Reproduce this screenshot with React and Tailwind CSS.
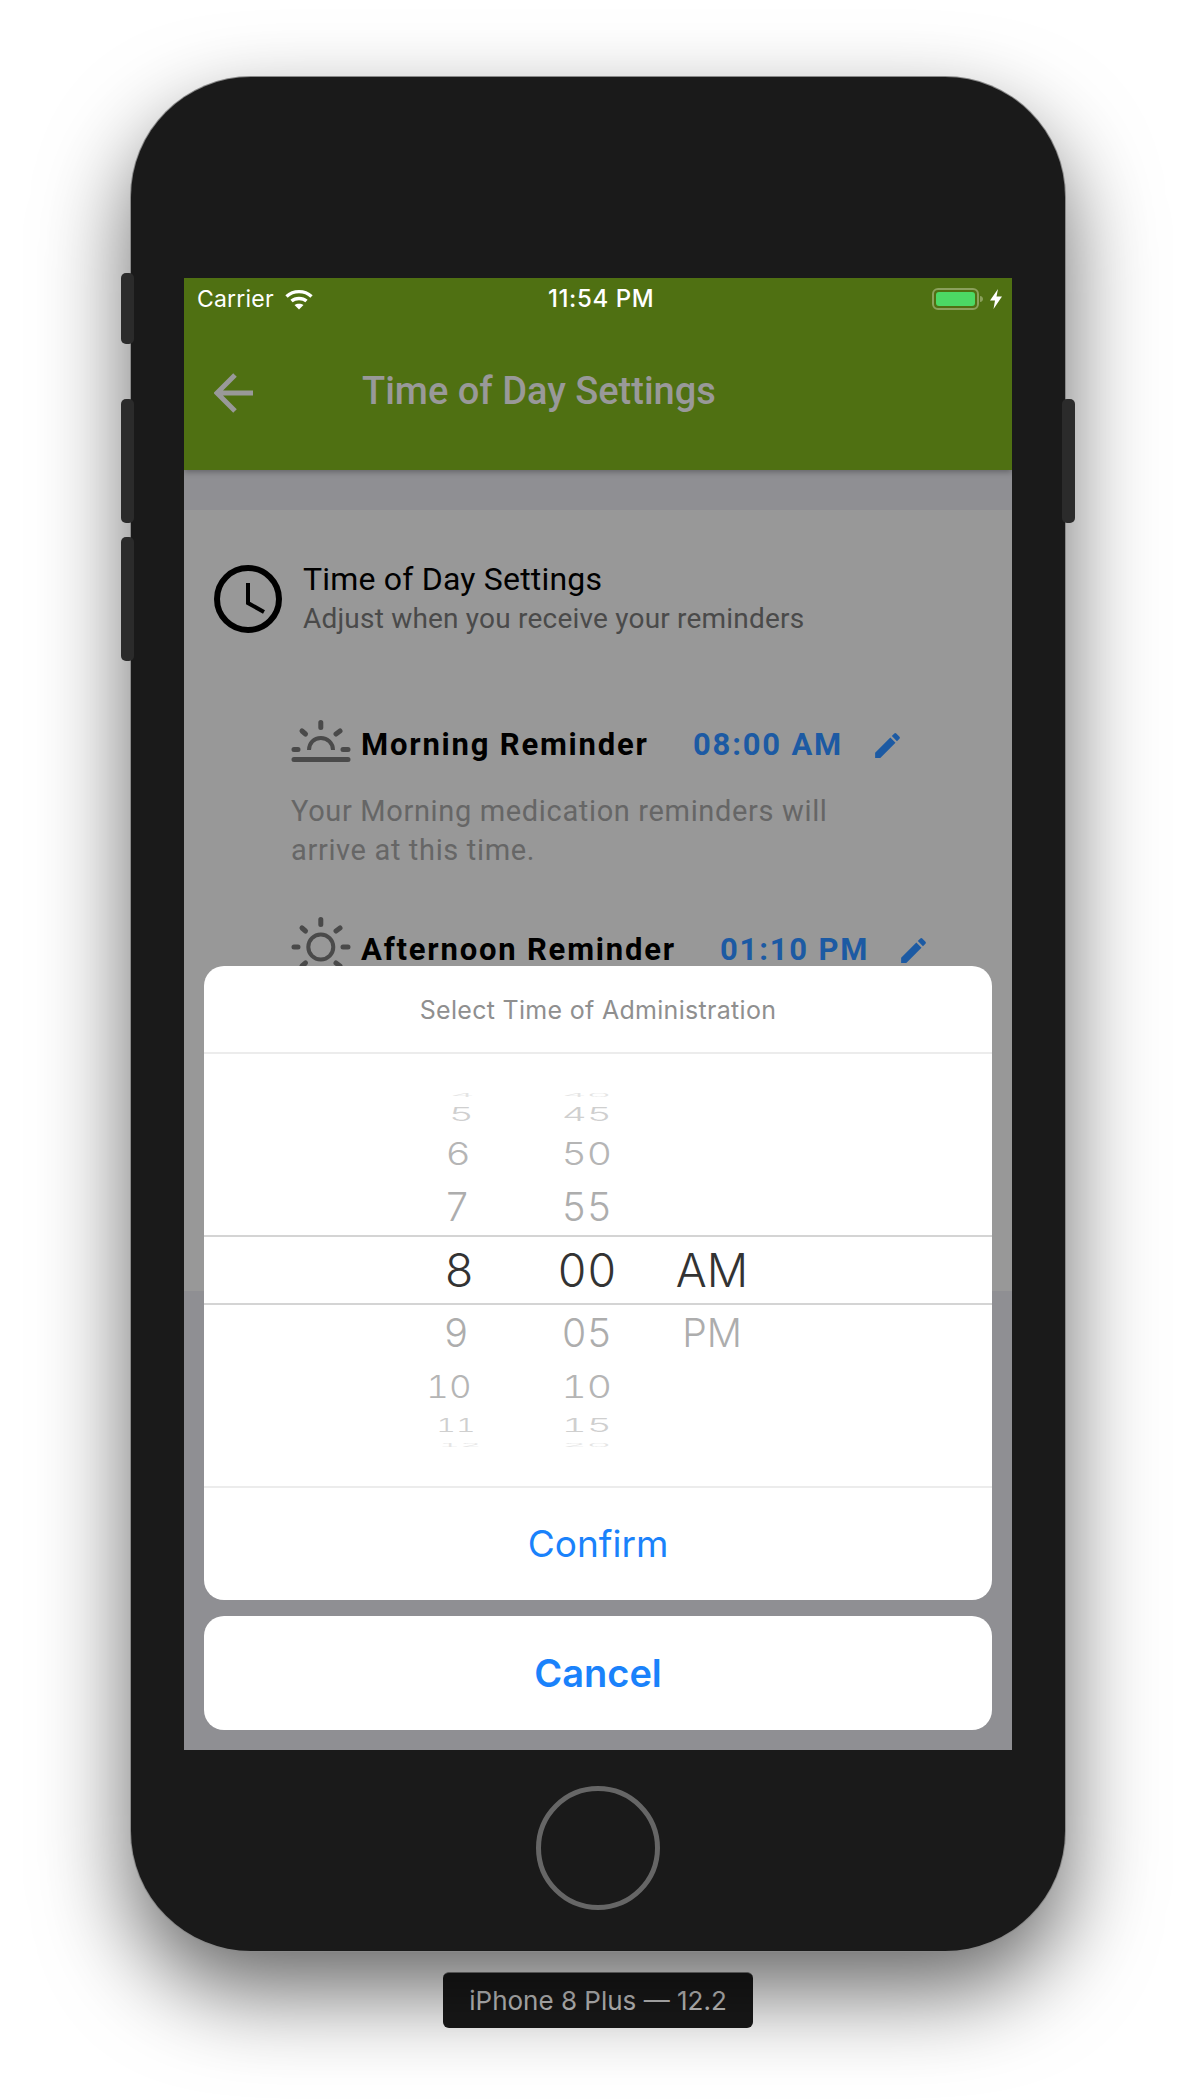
import React from 'react';
import { MdEdit } from 'react-icons/md';

const hourRows = [
  { h: 'h-[10px]', hour: '4', min: '40', hourX: 'scale-x-[0.82]', pad: 'pr-[27px]', sx: 'scale-x-[0.82]', sy: 'scale-y-[0.1]', color: 'text-[#e4e4e4]' },
  { h: 'h-[28px]', hour: '5', min: '45', hourX: 'scale-x-[0.84]', pad: 'pr-[28px]', sx: 'scale-x-[0.84]', sy: 'scale-y-[0.41]', color: 'text-[#cfcfcf]' },
  { h: 'h-[50px]', hour: '6', min: '50', hourX: 'scale-x-[0.85]', pad: 'pr-[31px]', sx: 'scale-x-[0.85]', sy: 'scale-y-[0.68]', color: 'text-[#b5b5b5]' },
  { h: 'h-[57px]', hour: '7', min: '55', hourX: 'scale-x-[0.85]', pad: 'pr-[32px]', sx: 'scale-x-[0.85]', sy: 'scale-y-[0.85]', color: 'text-[#adadad]' },
  { h: 'h-[70px]', hour: '8', min: '00', ampm: 'AM', hourX: '', pad: 'pr-[28px]', sx: '', sy: '', color: 'text-[#333333]', selected: true },
  { h: 'h-[55px]', hour: '9', min: '05', ampm: 'PM', hourX: 'scale-x-[0.85]', pad: 'pr-[33px]', sx: 'scale-x-[0.85]', sy: 'scale-y-[0.85]', color: 'text-[#adadad]' },
  { h: 'h-[52px]', hour: '10', min: '10', hourX: 'scale-x-[0.76]', pad: 'pr-[30px]', sx: 'scale-x-[0.85]', sy: 'scale-y-[0.68]', color: 'text-[#b5b5b5]' },
  { h: 'h-[25px]', hour: '11', min: '15', hourX: 'scale-x-[0.66]', pad: 'pr-[26px]', sx: 'scale-x-[0.84]', sy: 'scale-y-[0.41]', color: 'text-[#cfcfcf]' },
  { h: 'h-[15px]', hour: '12', min: '20', hourX: 'scale-x-[0.72]', pad: 'pr-[20px]', sx: 'scale-x-[0.82]', sy: 'scale-y-[0.1]', color: 'text-[#e4e4e4]' },
];

const WheelRow = ({ row }) => {
  const right = `block leading-none origin-right ${row.hourX} ${row.sy}`;
  const center = `block leading-none ${row.sx} ${row.sy}`;
  return (
    <div
      className={`grid grid-cols-[298px_170px_80px] grid-rows-[minmax(0,1fr)] font-['Inter',sans-serif] font-light tabular-nums text-[46px] ${row.h} ${row.color} ${
        row.selected ? 'border-y-2 border-[#d4d4d4]' : ''
      }`}
    >
      <div className={`min-h-0 flex items-center justify-end ${row.pad}`}>
        <span className={right}>{row.hour}</span>
      </div>
      <div className="min-h-0 flex items-center justify-center">
        <span className={center}>{row.min}</span>
      </div>
      <div className="min-h-0 flex items-center justify-center whitespace-nowrap">
        {row.ampm && <span className={center}>{row.ampm}</span>}
      </div>
    </div>
  );
};

const ClockIcon = () => (
  <svg width="68" height="68" viewBox="0 0 68 68" fill="none" stroke="#000" className="shrink-0">
    <circle cx="34" cy="34" r="31" strokeWidth="6" />
    <path d="M34 18V38L50 47" strokeWidth="4" />
  </svg>
);

const SunriseIcon = () => (
  <svg width="60" height="42" viewBox="0 0 60 42" fill="none" stroke="#4a4a4a" strokeWidth="5" strokeLinecap="round" className="shrink-0">
    <path d="M29.8 2.5V7.5M11 11L14.5 14M49 11L45 14M3 29.5H7M52 29.5H57M3 39.5H57" />
    <path d="M18 30C18 23 23 18 29.8 18C36.5 18 42 23 42 30" strokeWidth="4" strokeLinecap="butt" />
  </svg>
);

const SunIcon = () => (
  <svg width="60" height="60" viewBox="0 0 60 60" fill="none" stroke="#4a4a4a" strokeWidth="5" strokeLinecap="round" className="shrink-0">
    <circle cx="29.8" cy="30" r="12.5" strokeWidth="4" />
    <path d="M29.8 2.5V7.5M11 11L14.5 14M49 11L45 14M3 30H7M52 30H57M11 49L14.5 46M49 49L45 46" />
  </svg>
);

const ReminderRow = ({ icon, title, time, titleWidth, offset }) => (
  <div className="flex items-start">
    {icon}
    <div className={`flex items-center h-[34px] ml-[10px] font-['Roboto',sans-serif] font-bold text-[31px] leading-[34px] tracking-[1.8px] whitespace-nowrap ${offset}`}>
      <span className={`text-black ${titleWidth}`}>{title}</span>
      <span className="text-[#1c5aa3]">{time}</span>
      <MdEdit className="ml-[28px] text-[#1c5aa3]" size={33} />
    </div>
  </div>
);

export default function App() {
  return (
    <div className="relative w-[1196px] h-[2100px] bg-white overflow-hidden pt-[77px]">
      {/* hardware buttons */}
      <div className="absolute z-10 left-[121px] top-[273px] w-[13px] h-[71px] rounded-[5px] bg-[#2b2b2b]" />
      <div className="absolute z-10 left-[121px] top-[399px] w-[13px] h-[124px] rounded-[5px] bg-[#2b2b2b]" />
      <div className="absolute z-10 left-[121px] top-[537px] w-[13px] h-[124px] rounded-[5px] bg-[#2b2b2b]" />
      <div className="absolute z-10 left-[1062px] top-[399px] w-[13px] h-[124px] rounded-[5px] bg-[#2b2b2b]" />

      <div className="relative mx-auto w-[934px] h-[1874px] rounded-[120px] bg-[#1a1a1a] pt-[201px] flex flex-col items-center shadow-[0_0_0_1px_#8a8a8a,0_40px_90px_rgba(0,0,0,0.6)]">
        <div className="relative w-[828px] h-[1472px] bg-[#8f8f93] overflow-hidden shrink-0">
          <header className="h-[192px] bg-[#4f7012] shadow-[0_2px_6px_rgba(0,0,0,0.3)]">
            <div className="relative flex items-center justify-between h-[42px] pl-[13px] pr-[10px] text-white font-['Inter',sans-serif]">
              <div className="flex items-center">
                <span className="text-[23px] leading-none tracking-[0.2px]">Carrier</span>
                <svg width="28" height="21" viewBox="0 0 28 21" className="ml-[11px]" fill="none" stroke="#fff" strokeWidth="3.4">
                  <path d="M1.5 7.5C8.5 1 19.5 1 26.5 7.5" />
                  <path d="M6.5 12C10.5 8.6 17.5 8.6 21.5 12" />
                  <path d="M14 20.5L9.5 16C12 14.3 16 14.3 18.5 16Z" fill="#fff" stroke="none" />
                </svg>
              </div>
              <span className="absolute left-[364px] text-[24px] tracking-[0.6px] leading-none font-medium whitespace-nowrap">11:54 PM</span>
              <div className="flex items-center">
                <svg width="52" height="22" viewBox="0 0 52 22">
                  <rect x="1" y="1" width="45" height="20" rx="5" fill="none" stroke="#8ba05c" strokeWidth="2" />
                  <rect x="4" y="4" width="39" height="14" rx="3" fill="#4cd964" />
                  <path d="M48 8C50 8 51 9.5 51 11C51 12.5 50 14 48 14Z" fill="#8ba05c" />
                </svg>
                <svg width="12" height="20" viewBox="0 0 12 20" className="ml-[6px]">
                  <path d="M8 0L0 11.5H5L3.5 20L12 7.5H6.5Z" fill="#fff" />
                </svg>
              </div>
            </div>
            <div className="flex items-center h-[146px] pl-[30px]">
              <svg width="40" height="40" viewBox="0 0 40 40" fill="none" stroke="#999999" strokeWidth="5">
                <path d="M21 2L3 20L21 38M3 20H39" />
              </svg>
              <h1 className="ml-[108px] -mt-[5px] font-['Roboto',sans-serif] font-medium text-[38px] leading-none text-[#999999] whitespace-nowrap">
                Time of Day Settings
              </h1>
            </div>
          </header>

          <section className="mt-[40px] h-[781px] bg-[#989898] pt-[49px]">
            <div className="flex items-center pl-[30px]">
              <ClockIcon />
              <div className="ml-[21px] font-['Roboto',sans-serif]">
                <h2 className="text-[32px] leading-[40px] tracking-[0.2px] text-black whitespace-nowrap">Time of Day Settings</h2>
                <p className="text-[28px] leading-[40px] tracking-[0.2px] text-[#4a4a4a] whitespace-nowrap">Adjust when you receive your reminders</p>
              </div>
            </div>
            <div className="pl-[107px] mt-[81px]">
              <ReminderRow icon={<SunriseIcon />} title="Morning Reminder" time="08:00 AM" titleWidth="w-[332px]" offset="mt-[8px]" />
              <p className="mt-[30px] w-[560px] font-['Roboto',sans-serif] text-[29px] tracking-[0.65px] leading-[39px] text-[#666666]">
                Your Morning medication reminders will arrive at this time.
              </p>
              <div className="mt-[47px]">
                <ReminderRow icon={<SunIcon />} title="Afternoon Reminder" time="01:10 PM" titleWidth="w-[359px]" offset="mt-[16px]" />
              </div>
            </div>
          </section>

          {/* action sheet over the dimmed page */}
          <div className="absolute left-[20px] top-[688px] w-[788px] flex flex-col gap-[16px]">
            <div className="h-[634px] rounded-[20px] bg-white flex flex-col">
              <div className="h-[88px] pt-[3px] flex items-center justify-center border-b-2 border-[#ececec] font-['Inter',sans-serif] text-[25px] tracking-[0.3px] text-[#8f8f8f]">
                Select Time of Administration
              </div>
              <div className="h-[434px] pt-[36px] border-b-2 border-[#ececec]">
                {hourRows.map((row) => (
                  <WheelRow key={row.hour} row={row} />
                ))}
              </div>
              <div className="flex-1 flex items-center justify-center font-['Inter',sans-serif] text-[37px] text-[#1a82fb]">
                Confirm
              </div>
            </div>
            <div className="h-[114px] rounded-[20px] bg-white flex items-center justify-center font-['Inter',sans-serif] font-semibold text-[38px] text-[#1a82fb]">
              Cancel
            </div>
          </div>
        </div>

        <div className="mt-[36px] w-[124px] h-[124px] rounded-full border-[5px] border-[#666666]" />
      </div>

      <div className="mx-auto mt-[21px] w-[310px] h-[56px] rounded-[6px] bg-[#1a1a1a] border-t border-[#8a8a8a] flex items-center justify-center font-['Inter',sans-serif] text-[26px] text-[#d0d0d0] whitespace-nowrap">
        iPhone 8 Plus — 12.2
      </div>
    </div>
  );
}
